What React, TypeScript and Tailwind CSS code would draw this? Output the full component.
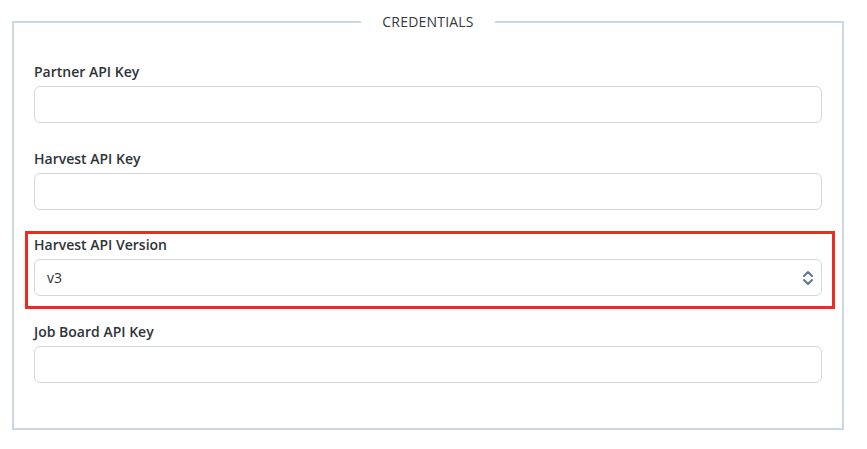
import React from "react";

function Field({ label, children, highlight = false }: { label: string; children?: React.ReactNode; highlight?: boolean }) {
  return (
    <div className="relative mb-[25.7px] flex flex-col">
      {highlight && (
        <div className="pointer-events-none absolute -left-[9px] -top-[4px] -right-[13px] -bottom-[13px] border-[3px] border-[#ec2b23]" />
      )}
      <label className="text-[14px] leading-[20px] font-semibold text-[#2e3338]">{label}</label>
      <div className="mt-[4px]">
        {children ?? (
          <input className="block h-[37px] w-full rounded-[6px] border border-[#d3d7dc] bg-white px-3 text-[14px] outline-none" />
        )}
      </div>
    </div>
  );
}

export default function App() {
  return (
    <div className="min-h-[449px] w-[867px] bg-white pl-[12px] pt-[12px] font-['Open_Sans',sans-serif]">
      <fieldset className="w-[832px] border-2 border-[#cbd7e2] px-[20px] pt-[30px] pb-[19px]">
        <legend className="mx-auto px-[21px] text-[14px] leading-[20px] tracking-[0.2px] text-[#33383d]">CREDENTIALS</legend>
        <Field label="Partner API Key" />
        <Field label="Harvest API Key" />
        <Field label="Harvest API Version" highlight>
          <div className="flex h-[37px] w-full items-center justify-between rounded-[6px] border border-[#d3d7dc] bg-white pl-[12px] pr-[6px]">
            <span className="text-[14px] text-[#2e3338]">v3</span>
            <svg width="14" height="18" viewBox="0 0 14 18" fill="none" stroke="#5f7590" strokeWidth="2" strokeLinecap="round" strokeLinejoin="round">
              <path d="M3 7 L7 3 L11 7" />
              <path d="M3 11 L7 15 L11 11" />
            </svg>
          </div>
        </Field>
        <Field label="Job Board API Key" />
      </fieldset>
    </div>
  );
}
